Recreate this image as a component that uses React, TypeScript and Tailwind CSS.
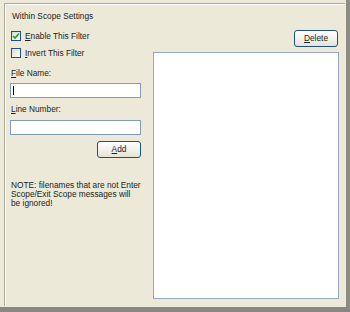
const font = { fontFamily: '"Liberation Sans", Arial, sans-serif' }

const Check = ({ checked }: { checked?: boolean }) => (
  <span className="w-[10px] h-[10px] ml-[1px] border border-[#1c5180] bg-gradient-to-br from-[#dcdbd5] to-white flex items-center justify-center">
    {checked && (
      <svg width="8" height="8" viewBox="0 0 8 8">
        <path d="M1 4 L3 6 L7 1.5" stroke="#21a121" strokeWidth="1.6" fill="none" />
      </svg>
    )}
  </span>
)

const Button = ({ children }: { children: React.ReactNode }) => (
  <button className="w-[44px] h-[17px] rounded-[3px] border border-[#1c5180] bg-gradient-to-b from-white to-[#e6e3d6] text-[8.3px] leading-[9px] text-[#222] flex items-center justify-center">
    {children}
  </button>
)

export default function App() {
  return (
    <div
      className="w-[350px] h-[312px] bg-[#ece9d8] border-r-[4px] border-b-[5px] border-r-[#8d8c84] border-b-[#898880] flex text-[#222]"
      style={font}
    >
      <div className="flex-1 flex pl-[4px] pt-[3px] pr-[1px] pb-[1px]">
        <div className="flex-1 flex border-t border-l border-[#aca899] border-r-white border-b-white">
          <div className="flex-1 flex border-t border-l border-white border-r-[#aca899] border-b-[#aca899]">
            {/* left column */}
            <div className="ml-[4px] w-[131px] flex flex-col text-[8.3px] whitespace-nowrap">
              <div className="mt-[6px] h-[10px] leading-[10px] pl-[2px]">Within Scope Settings</div>

              <label className="mt-[10px] h-[10px] flex items-center gap-[4px] leading-[10px]">
                <Check checked />
                <span><u>E</u>nable This Filter</span>
              </label>
              <label className="mt-[7px] h-[10px] flex items-center gap-[4px] leading-[10px]">
                <Check />
                <span><u>I</u>nvert This Filter</span>
              </label>

              <div className="mt-[10px] h-[10px] leading-[10px] pl-[1px]"><u>F</u>ile Name:</div>
              <div className="mt-[5px] h-[15px] border border-[#7f9db9] bg-white flex items-center pl-[2px]">
                <span className="w-px h-[9px] bg-black" />
              </div>

              <div className="mt-[6px] h-[10px] leading-[10px] pl-[1px]"><u>L</u>ine Number:</div>
              <div className="mt-[6px] h-[15px] border border-[#7f9db9] bg-white" />

              <div className="mt-[6px] self-end">
                <Button><u>A</u>dd</Button>
              </div>

              <p className="mt-[23px] leading-[9px] pl-[1px]">
                NOTE: filenames that are not Enter
                <br />
                Scope/Exit Scope messages will
                <br />
                be ignored!
              </p>
            </div>

            {/* right column */}
            <div className="ml-[12px] w-[186px] flex flex-col">
              <div className="mt-[25px] self-end mr-[1px]">
                <Button><u>D</u>elete</Button>
              </div>
              <div className="mt-[5px] h-[247px] border border-[#94a9c4] bg-white" />
            </div>
          </div>
        </div>
      </div>
    </div>
  )
}
